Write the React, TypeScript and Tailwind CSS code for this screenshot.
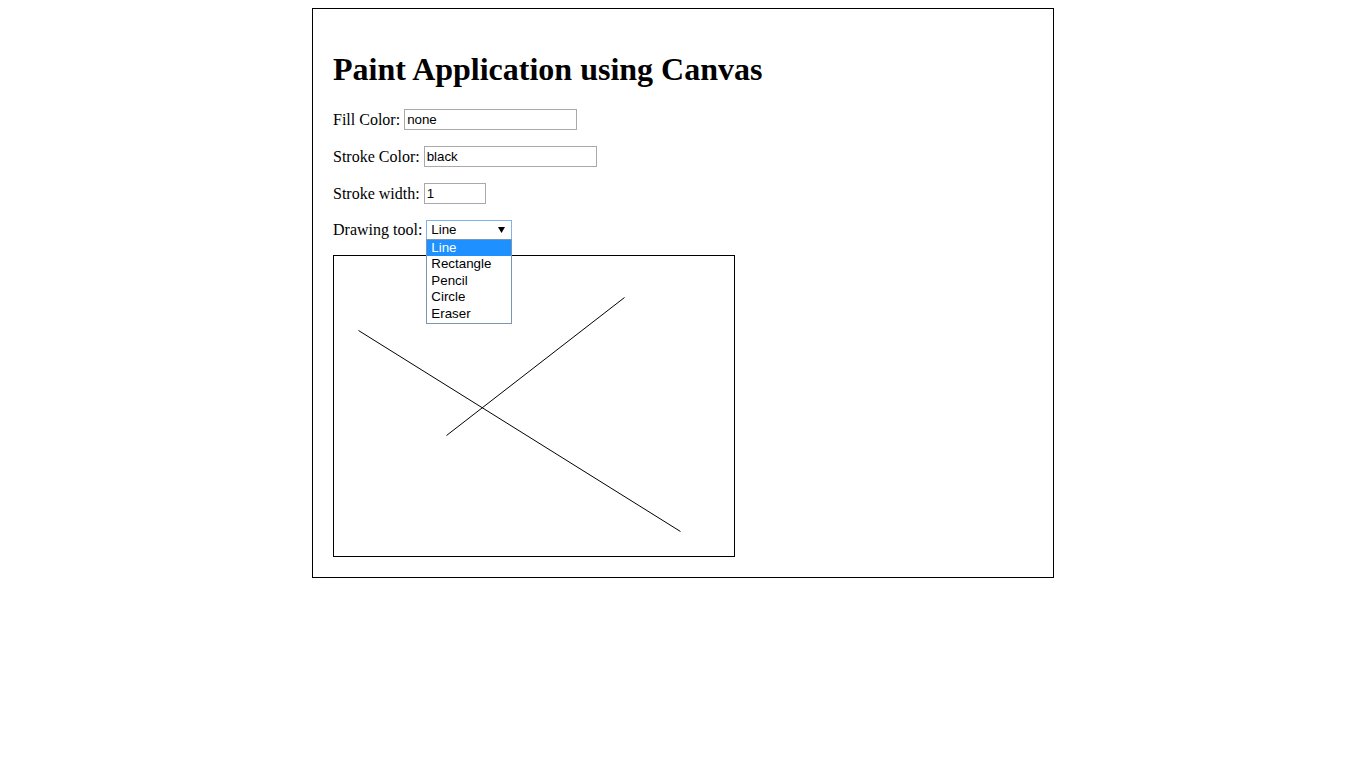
import React from "react";

export default function App() {
  const options = ["Line", "Rectangle", "Pencil", "Circle", "Eraser"];
  return (
    <div className="bg-white min-h-[768px] pt-2">
      <div className="mx-auto w-[742px] border border-black p-5 font-['Liberation_Serif','Times_New_Roman',serif] text-black text-[16px]">
        <h1 className="text-[32px] font-bold leading-[36.8px] mt-[22.44px] mb-[20.44px]">
          Paint Application using Canvas
        </h1>
        <div className="flex items-center h-[21px] mb-4">
          <span className="pt-[2px]">Fill Color:</span>
          <div className="ml-1 w-[173px] h-[21px] border border-[#a9a9a9] px-[2px] pt-[2px] flex items-center font-['Liberation_Sans',Arial,sans-serif] text-[13.33px]">
            none
          </div>
        </div>
        <div className="flex items-center h-[21px] mb-4">
          <span className="pt-[2px]">Stroke Color:</span>
          <div className="ml-1 w-[173px] h-[21px] border border-[#a9a9a9] px-[2px] pt-[2px] flex items-center font-['Liberation_Sans',Arial,sans-serif] text-[13.33px]">
            black
          </div>
        </div>
        <div className="flex items-center h-[21px] mb-4">
          <span className="pt-[2px]">Stroke width:</span>
          <div className="ml-1 w-[62px] h-[21px] border border-[#a9a9a9] px-[2px] pt-[2px] flex items-center font-['Liberation_Sans',Arial,sans-serif] text-[13.33px]">
            1
          </div>
        </div>
        <div className="flex items-center h-[20px] mb-[15px]">
          <span>Drawing tool:</span>
          <div className="relative ml-1 w-[86px] h-[20px]">
            <div className="w-full h-full border border-[#7eb4ea] pl-1 pr-[6px] flex items-center justify-between font-['Liberation_Sans',Arial,sans-serif] text-[13.33px]">
              <span>Line</span>
              <svg width="7" height="6" viewBox="0 0 7 6">
                <polygon points="0,0 7,0 3.5,6" fill="#000" />
              </svg>
            </div>
            <div className="absolute left-0 top-[19px] w-[86px] bg-white border border-[#7a96b0] font-['Liberation_Sans',Arial,sans-serif] text-[13.33px] z-10">
              {options.map((o, i) => (
                <div
                  key={o}
                  className={
                    i === 0
                      ? "h-[16.6px] leading-[16.6px] pl-1 bg-[#1e90ff] text-white"
                      : "h-[16.6px] leading-[16.6px] pl-1 text-black"
                  }
                >
                  {o}
                </div>
              ))}
            </div>
          </div>
        </div>
        <div className="w-[402px] h-[302px] border border-black">
          <svg width="400" height="300" viewBox="0 0 400 300">
            <line x1="24.5" y1="74.5" x2="346.5" y2="275.5" stroke="#000" strokeWidth="1" />
            <line x1="112.5" y1="179.5" x2="290.5" y2="41.5" stroke="#000" strokeWidth="1" />
          </svg>
        </div>
      </div>
    </div>
  );
}
